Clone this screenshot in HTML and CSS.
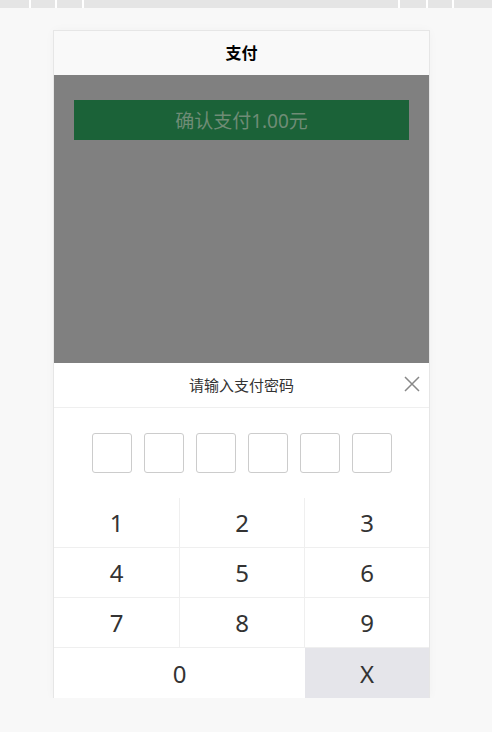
FILE: index.html
```html
<!DOCTYPE html>
<html lang="zh-CN">
  <head>
    <meta charset="UTF-8">
    <meta name="viewport" content="width=device-width, initial-scale=1.0">
    <title>支付</title>
    <link rel="stylesheet" href="styles.css">
  </head>
  <body>
    <div class="tabstrip">
      <span class="tab tab-a"></span>
      <span class="tab tab-b"></span>
      <span class="tab tab-c"></span>
      <span class="tab tab-spacer"></span>
      <span class="tab tab-d"></span>
      <span class="tab tab-e"></span>
      <span class="tab tab-f"></span>
    </div>
    <div class="phone">
      <header class="nav-bar">支付</header>
      <main class="page">
        <button class="pay-btn">确认支付1.00元</button>
      </main>
      <section class="pay-sheet">
        <div class="sheet-head">
          <span>请输入支付密码</span>
          <svg class="close" width="16" height="16" viewBox="0 0 16 16">
            <path d="M1 1 L15 15 M15 1 L1 15" stroke="#888" stroke-width="1.5" fill="none"/>
          </svg>
        </div>
        <div class="pwd-boxes">
          <span class="pwd-box"></span>
          <span class="pwd-box"></span>
          <span class="pwd-box"></span>
          <span class="pwd-box"></span>
          <span class="pwd-box"></span>
          <span class="pwd-box"></span>
        </div>
        <div class="keypad">
          <div class="key">1</div>
          <div class="key">2</div>
          <div class="key">3</div>
          <div class="key">4</div>
          <div class="key">5</div>
          <div class="key">6</div>
          <div class="key">7</div>
          <div class="key">8</div>
          <div class="key">9</div>
          <div class="key key-zero">0</div>
          <div class="key key-del">X</div>
        </div>
      </section>
    </div>
  </body>
</html>
```

FILE: styles.css
```css
body {
  margin: 0;
  background: #f8f8f8;
  font-family: "Noto Sans", "Noto Sans CJK SC", sans-serif;
  color: #333;
}

.tabstrip {
  display: flex;
  height: 8px;
  background: #ffffff;
  gap: 2px;
}

.tab {
  background: #e5e5e5;
}

.tab-a { width: 29px; }
.tab-b { width: 24px; }
.tab-c { width: 25px; }
.tab-spacer { flex: 1; }
.tab-d { width: 26px; }
.tab-e { width: 24px; }
.tab-f { width: 38px; }

.phone {
  width: 375px;
  margin: 23px 0 0 54px;
  background: #fff;
  box-shadow: 0 0 0 1px #e6e6e6, 0 0 10px rgba(0, 0, 0, 0.04);
}

.nav-bar {
  height: 44px;
  line-height: 44px;
  text-align: center;
  font-size: 16px;
  font-weight: bold;
  color: #000;
  background: #f9f9f9;
}

.page {
  height: 288px;
  box-sizing: border-box;
  padding: 25px 20px 0;
  background: #808080;
}

.pay-btn {
  display: block;
  width: 100%;
  height: 40px;
  border: 0;
  background: #1b6238;
  color: #6f8c76;
  font-family: "Noto Sans", "Noto Sans CJK SC", sans-serif;
  font-size: 19px;
}

.pay-sheet {
  background: #fff;
}

.sheet-head {
  position: relative;
  height: 44px;
  line-height: 44px;
  text-align: center;
  font-size: 15px;
  border-bottom: 1px solid #efefef;
}

.close {
  position: absolute;
  right: 9px;
  top: 13px;
}

.pwd-boxes {
  display: flex;
  justify-content: center;
  gap: 12px;
  padding: 25px 0 25px;
}

.pwd-box {
  width: 38px;
  height: 38px;
  border: 1px solid #ccc;
  border-radius: 3px;
}

.keypad {
  display: grid;
  grid-template-columns: 126px 125px 1fr;
  grid-auto-rows: 50px;
}

.key {
  display: flex;
  align-items: center;
  justify-content: center;
  font-size: 24px;
  color: #333;
  border-right: 1px solid #efefef;
  border-bottom: 1px solid #efefef;
}

.key:nth-child(3n) {
  border-right: 0;
}

.key-zero {
  grid-column: span 2;
  border-right: 0;
  border-bottom: 0;
}

.key-del {
  background: #e5e5ea;
  border: 0;
}
```
